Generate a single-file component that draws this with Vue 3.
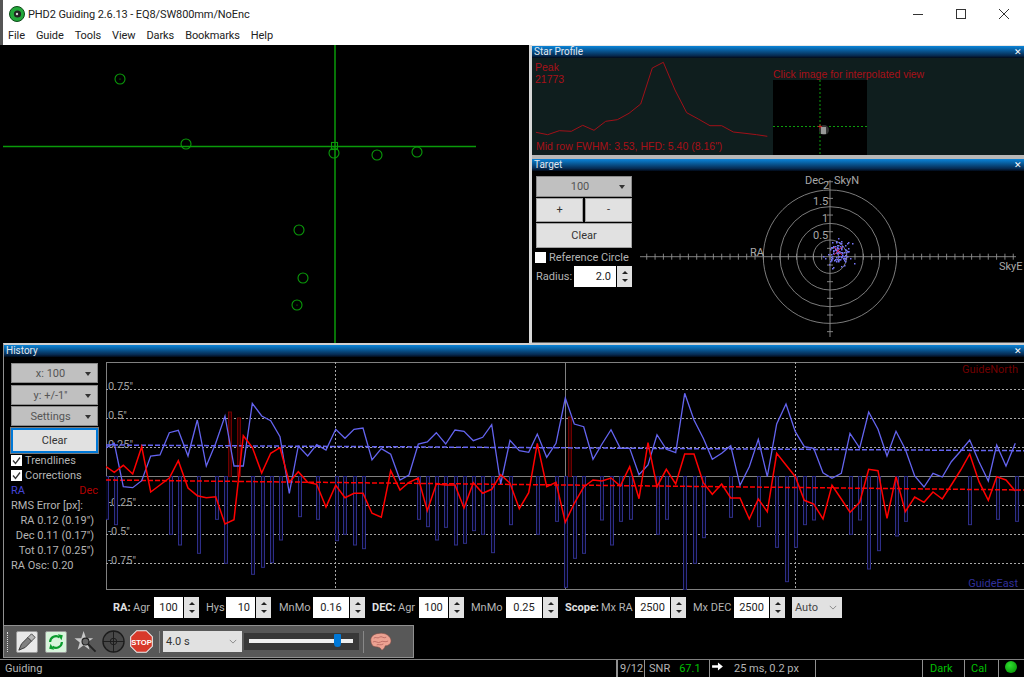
<script setup>
import { computed } from 'vue'

const menu = ['File', 'Guide', 'Tools', 'View', 'Darks', 'Bookmarks', 'Help']

// stars on the main camera view
const stars = [[120, 79, true], [186, 144], [334, 153], [377, 155], [417, 152], [299, 230], [303, 278], [297, 305, true]]

// coordinates read from zoomed crops, 3x scale
const fromZoom = (pts, ox) => pts.map(([x, y]) => [ox + x / 3, 360 + y / 3])
const toLine = pts => pts.map(p => p[0].toFixed(1) + ',' + p[1].toFixed(1)).join(' ')

const blueLine = computed(() => toLine([
  ...fromZoom([[0, 265], [28, 250], [55, 380], [83, 383], [110, 362], [137, 288], [165, 285], [193, 218], [220, 211], [249, 288], [277, 180], [304, 318], [332, 250], [360, 168], [387, 318], [415, 318], [442, 130], [470, 168], [497, 182], [525, 230], [553, 400], [580, 258], [608, 288], [635, 254], [663, 270], [692, 208]], 105),
  ...fromZoom([[15, 235], [42, 208], [69, 204], [96, 300], [124, 266], [152, 283], [180, 360], [207, 345], [235, 252], [262, 246], [289, 218], [317, 252], [345, 210], [372, 214], [400, 242], [428, 232], [455, 194], [482, 372], [510, 241], [538, 272], [566, 277], [592, 222], [620, 292], [648, 250], [676, 114], [703, 192], [731, 200], [759, 298], [786, 252], [813, 209], [841, 265], [869, 265], [897, 344], [924, 315], [951, 224], [979, 268], [1007, 278]], 340),
  ...fromZoom([[14, 100], [42, 180], [70, 235], [97, 298], [125, 280], [152, 257], [180, 376], [208, 320], [235, 238], [262, 350], [290, 192], [318, 132], [346, 215], [373, 260], [401, 265], [429, 338], [456, 355], [484, 340], [510, 220], [539, 264], [566, 156], [594, 208], [621, 288], [648, 214], [676, 268], [704, 348], [732, 381], [759, 340], [787, 351], [814, 305], [842, 273], [869, 240], [897, 305], [925, 363], [950, 255], [978, 318], [1006, 250]], 680)
]))

const redLine = computed(() => toLine([
  ...fromZoom([[0, 318], [28, 337], [55, 316], [83, 342], [110, 260], [137, 396], [165, 375], [193, 354], [220, 302], [249, 384], [277, 407], [304, 413], [332, 410], [360, 492], [387, 479], [415, 227], [442, 262], [470, 339], [497, 280], [525, 263], [553, 367], [580, 335], [608, 367], [635, 373], [663, 441], [692, 376]], 105),
  ...fromZoom([[15, 413], [42, 400], [69, 400], [96, 460], [124, 472], [152, 332], [180, 390], [207, 367], [235, 354], [262, 452], [289, 372], [317, 375], [345, 375], [372, 444], [400, 368], [428, 400], [455, 388], [482, 344], [510, 370], [538, 446], [566, 398], [592, 250], [620, 380], [648, 367], [676, 487], [703, 430], [731, 381], [759, 360], [786, 363], [813, 354], [841, 378], [869, 320], [897, 416], [924, 248], [951, 380], [979, 328], [1007, 372]], 340),
  ...fromZoom([[14, 282], [42, 282], [70, 368], [97, 403], [125, 372], [152, 414], [180, 414], [208, 477], [235, 417], [262, 455], [290, 280], [318, 315], [346, 350], [373, 421], [401, 432], [429, 477], [456, 376], [484, 417], [510, 457], [539, 427], [566, 328], [594, 332], [621, 475], [648, 350], [676, 455], [704, 411], [732, 427], [759, 396], [787, 417], [814, 375], [842, 330], [869, 282], [897, 365], [925, 421], [950, 350], [978, 360], [1006, 393]], 680)
]))

// blue correction bars, [x, bottom]
const blueBars = [
  ...fromZoom([[5, 478], [32, 494], [197, 523], [225, 555], [281, 580], [335, 478], [363, 610], [445, 643], [473, 622], [500, 608], [527, 540], [584, 470], [638, 478], [695, 542]], 105),
  ...fromZoom([[15, 523], [44, 555], [72, 566], [237, 478], [265, 500], [292, 540], [319, 502], [347, 555], [375, 550], [402, 512], [430, 523], [458, 578], [512, 494], [595, 523], [650, 484], [679, 682], [705, 595], [733, 580], [787, 480], [815, 555], [843, 484], [873, 478], [955, 523], [981, 478]], 340),
  ...fromZoom([[15, 690], [45, 610], [72, 533], [154, 472], [238, 500], [292, 562], [320, 665], [348, 562], [375, 494], [403, 480], [513, 523], [541, 480], [568, 627], [596, 572], [650, 528], [678, 484], [871, 494], [954, 478], [1010, 484]], 680)
].map(b => [Math.round(b[0]) - 1.5, b[1]])
const redBars = [[230, 412], [239, 418], [570, 417]]

const gridY = [389.5, 418.5, 447.5, 505.5, 534.5, 563.5]
const yLabels = [['0.75"', 390], ['0.5"', 419], ['0.25"', 448], ['-0.25"', 506], ['-0.5"', 535], ['-0.75"', 564]]

// target plot
const cx = 830
const cy = 256.7
const unit = 8.33
const hTicks = computed(() => {
  const out = []
  for (let k = -22; k <= 22; k++) out.push(cx + k * unit)
  return out
})
const vTicks = [-9, -7, -5, -3, -1, 1, 3, 5, 7, 9].map(k => cy + k * unit)

const scatter = computed(() => {
  let seed = 17
  const rnd = () => {
    seed = (seed * 16807) % 2147483647
    return seed / 2147483647
  }
  const out = []
  for (let i = 0; i < 90; i++) {
    const a = rnd() * Math.PI * 2
    const r = (rnd() + rnd()) * 6.5
    out.push([Math.round(838 + Math.cos(a) * r * 1.1), Math.round(252 + Math.sin(a) * r * 1.3)])
  }
  return out.concat([[847, 243], [852, 243], [844, 260], [850, 258], [854, 263], [825, 258], [829, 264], [833, 267], [832, 268], [844, 265], [823, 256]])
})

const sideText = [
  { t: 'RMS Error [px]:' },
  { t: 'RA 0.12 (0.19")', r: true },
  { t: 'Dec 0.11 (0.17")', r: true },
  { t: 'Tot 0.17 (0.25")', r: true },
  { t: 'RA Osc: 0.20' }
]

// bottom row of the history panel, w = label width, iw = input width, after = space after spinner
const fields = [
  { bold: 'RA:', label: 'Agr', lead: 20, w: 41, val: '100', iw: 29, after: 7 },
  { label: 'Hys', w: 20, val: '10', iw: 29, after: 8, right: true },
  { label: 'MnMo', w: 34, val: '0.16', iw: 36, after: 7 },
  { bold: 'DEC:', label: 'Agr', lead: 26, w: 47, val: '100', iw: 29, after: 7 },
  { label: 'MnMo', w: 35, val: '0.25', iw: 36, after: 7 },
  { bold: 'Scope:', label: 'Mx RA', lead: 36, w: 70, val: '2500', iw: 35, after: 7 },
  { label: 'Mx DEC', w: 41, val: '2500', iw: 35, after: 7 }
]
</script>

<template>
  <div class="app">
    <header class="titlebar">
      <svg class="logo" viewBox="0 0 16 16">
        <circle cx="8" cy="8" r="7.5" fill="#23a83a" />
        <circle cx="8" cy="8" r="7.5" fill="none" stroke="#0c4a18" />
        <circle cx="8.5" cy="8" r="3.6" fill="#222" />
        <circle cx="8" cy="8" r="1.2" fill="#ddd" />
      </svg>
      <span class="title">PHD2 Guiding 2.6.13 - EQ8/SW800mm/NoEnc</span>
      <div class="winbtns">
        <svg viewBox="0 0 10 10"><path d="M0 5.5H10" /></svg>
        <svg viewBox="0 0 10 10"><rect x="0.5" y="0.5" width="9" height="9" /></svg>
        <svg viewBox="0 0 10 10"><path d="M0 0L10 10M10 0L0 10" /></svg>
      </div>
    </header>
    <nav class="menubar">
      <span v-for="m in menu" :key="m">{{ m }}</span>
    </nav>

    <div class="top">
      <svg class="camera" viewBox="3 45 526 298">
        <line x1="335" y1="45" x2="335" y2="343" class="cam-line" />
        <line x1="3" y1="146.5" x2="476" y2="146.5" class="cam-line" />
        <rect x="331.5" y="142.5" width="6" height="7" class="cam-thin" />
        <g v-for="s in stars" :key="s[0]">
          <circle :cx="s[0]" :cy="s[1]" r="5" class="cam-thin" />
          <circle v-if="s[2]" :cx="s[0]" :cy="s[1]" r="0.6" fill="#0a0" />
        </g>
      </svg>

      <div class="right">
        <section class="panel profile">
          <div class="caption">Star Profile<span class="x">✕</span></div>
          <svg class="fill" viewBox="532 58 492 97">
            <polyline class="prof" points="536,132.3 547.7,134.7 559.3,130.7 571.3,131.3 582.7,125.3 594,130.3 605.7,121.3 617.3,119.7 629,113.3 640.7,104 652.3,68 663.3,62.3 675,90 686.7,112.7 698.3,119 710,125.7 721.7,125.7 733.3,132 745,133.3 756.7,134.7 767.3,136.3" />
            <text x="535" y="71" class="prof-text">Peak</text>
            <text x="535" y="83" class="prof-text">21773</text>
            <text x="536" y="150" class="prof-text">Mid row FWHM: 3.53, HFD: 5.40 (8.16")</text>
            <text x="773" y="78" class="prof-text">Click image for interpolated view</text>
            <rect x="773" y="80" width="94" height="75" fill="#000" />
            <line x1="820" y1="80" x2="820" y2="155" class="prof-dash" />
            <line x1="773" y1="126.5" x2="867" y2="126.5" class="prof-dash" />
            <circle cx="824" cy="130" r="5" fill="#333" />
            <rect x="821" y="127" width="5" height="7" fill="#999" />
            <path d="M818 126.5H822M820 124.5V128.5" stroke="#c02020" />
          </svg>
        </section>
        <section class="panel target">
          <div class="caption">Target<span class="x">✕</span></div>
          <div class="target-body">
            <div class="target-ctl">
              <div class="dd dd-big">100<i class="caret"></i></div>
              <div class="pm">
                <div class="btn">+</div>
                <div class="btn">-</div>
              </div>
              <div class="btn clear-t">Clear</div>
              <label class="check"><span class="box"></span>Reference Circle</label>
              <div class="radius">
                <span>Radius:</span>
                <span class="input input-r">2.0</span>
                <span class="spin"><i class="up"></i><i class="down"></i></span>
              </div>
            </div>
            <svg class="plot" viewBox="640 171 384 171">
              <circle v-for="r in [16.7, 33.3, 50, 66.7]" :key="r" :cx="cx" :cy="cy" :r="r" class="ring" />
              <line x1="640" :y1="cy" x2="1016" :y2="cy" class="axis" />
              <line :x1="cx" y1="180" :x2="cx" y2="337" class="axis" />
              <line v-for="t in hTicks" :key="t" :x1="t" :y1="cy - 3" :x2="t" :y2="cy + 3" class="axis" />
              <line v-for="t in vTicks" :key="t" :x1="cx - 3" :y1="t" :x2="cx + 3" :y2="t" class="axis" />
              <text x="805" y="184" class="plot-text">Dec</text>
              <text x="823" y="189" class="plot-text">2</text>
              <text x="834" y="184" class="plot-text">SkyN</text>
              <text x="813" y="205" class="plot-text">1.5</text>
              <text x="822" y="222" class="plot-text">1</text>
              <text x="813" y="239" class="plot-text">0.5</text>
              <text x="750" y="256" class="plot-text">RA</text>
              <text x="999" y="270" class="plot-text">SkyE</text>
              <rect v-for="(p, i) in scatter" :key="i" :x="p[0]" :y="p[1]" width="1.5" height="1.5" fill="#7474f4" />
              <path d="M834 247L842 255M842 247L834 255" stroke="#e02050" stroke-width="0.8" />
            </svg>
          </div>
        </section>
      </div>
    </div>

    <section class="panel history">
      <div class="caption">History<span class="x">✕</span></div>
      <div class="hist-main">
        <aside class="hist-side">
          <div class="dd">x: 100<i class="caret"></i></div>
          <div class="dd">y: +/-1''<i class="caret"></i></div>
          <div class="dd">Settings<i class="caret"></i></div>
          <div class="btn clear-h">Clear</div>
          <label class="check"><span class="box"><svg viewBox="0 0 11 11"><path d="M2 5.5L4.5 8.5L9 2.5" /></svg></span>Trendlines</label>
          <label class="check"><span class="box"><svg viewBox="0 0 11 11"><path d="M2 5.5L4.5 8.5L9 2.5" /></svg></span>Corrections</label>
          <div class="legend"><span class="ra">RA</span><span class="dec">Dec</span></div>
          <div v-for="s in sideText" :key="s.t" class="sline" :class="{ rt: s.r }">{{ s.t }}</div>
        </aside>
        <svg class="graph" viewBox="106 362 918 228">
          <rect x="106.5" y="362.5" width="920" height="227" fill="none" stroke="#808080" />
          <line v-for="y in gridY" :key="y" x1="106" :y1="y" x2="1024" :y2="y" class="gdash" />
          <line x1="106" y1="476.5" x2="1024" y2="476.5" stroke="#808080" />
          <line x1="335.5" y1="362" x2="335.5" y2="590" class="gdash" />
          <line x1="795.5" y1="362" x2="795.5" y2="590" class="gdash" />
          <line x1="565.5" y1="362" x2="565.5" y2="590" stroke="#808080" />
          <text v-for="l in yLabels" :key="l[0]" x="108" :y="l[1]" class="glabel">{{ l[0] }}</text>
          <text x="1018" y="373" text-anchor="end" class="gnorth">GuideNorth</text>
          <text x="1018" y="587" text-anchor="end" class="geast">GuideEast</text>
          <rect v-for="(b, i) in blueBars" :key="i" :x="b[0]" y="476.5" width="3" :height="b[1] - 476.5" class="bbar" />
          <rect v-for="b in redBars" :key="b[0]" :x="b[0] - 1.5" :y="b[1]" width="3" :height="476.5 - b[1]" class="rbar" />
          <line x1="106" y1="445" x2="1024" y2="450.7" class="trend-b" />
          <line x1="106" y1="480" x2="1024" y2="490" class="trend-r" />
          <polyline :points="blueLine" class="line-b" />
          <polyline :points="redLine" class="line-r" />
        </svg>
      </div>
      <div class="hist-controls">
        <div v-for="f in fields" :key="f.label + f.val" class="field" :style="{ marginRight: f.after + 'px' }">
          <div class="flabel" :style="{ width: f.w + 'px' }">
            <b v-if="f.bold" :style="{ width: f.lead + 'px' }">{{ f.bold }}</b>{{ f.label }}
          </div>
          <span class="input" :class="{ 'input-r': f.right }" :style="{ width: f.iw + 'px' }">{{ f.val }}</span>
          <span class="spin"><i class="up"></i><i class="down"></i></span>
        </div>
        <div class="auto">Auto<svg viewBox="0 0 10 6"><path d="M1 1L5 5L9 1" /></svg></div>
      </div>
    </section>

    <div class="toolbar-row">
      <div class="toolbar">
        <span class="grip"></span>
        <div class="tool tool-usb">
          <svg viewBox="0 0 22 22">
            <path d="M2 20L5 13L12 6L16 10L9 17Z" fill="#808080" stroke="#333" />
            <path d="M12 6L16 2L20 6L16 10Z" fill="#b8b8b8" stroke="#444" />
          </svg>
        </div>
        <div class="tool tool-loop">
          <svg viewBox="0 0 22 22">
            <path d="M4.5 11A6.5 6.5 0 0 1 15 6" class="loop" />
            <path d="M17.5 11A6.5 6.5 0 0 1 7 16" class="loop" />
            <path d="M13 2.5L18.5 3.5L17 9Z" fill="#0a9c2e" />
            <path d="M9 19.5L3.5 18.5L5 13Z" fill="#0a9c2e" />
          </svg>
        </div>
        <svg class="ticon" viewBox="0 0 24 24">
          <path d="M10 1L12.6 8.5H20L14 13L16.2 20.5L10 16L3.8 20.5L6 13L0.5 8.5H7.6Z" fill="#c8c8c8" />
          <circle cx="12" cy="12" r="3.6" fill="#666" stroke="#222" stroke-width="1.2" />
          <path d="M15 15L22.5 22.5" stroke="#222" stroke-width="2" />
        </svg>
        <svg class="ticon ticon-t" viewBox="0 0 24 24">
          <circle cx="12" cy="12" r="11" fill="#484848" stroke="#1c1c1c" stroke-width="1.4" />
          <circle cx="12" cy="12" r="3.4" fill="none" stroke="#1c1c1c" />
          <path d="M1 12H23M12 1V23" stroke="#1c1c1c" />
        </svg>
        <svg class="ticon ticon-s" viewBox="0 0 24 24">
          <path d="M7 0.7H17L23.3 7V17L17 23.3H7L0.7 17V7Z" fill="#d8392b" stroke="#eee" stroke-width="1.1" />
          <text x="12" y="15.6" text-anchor="middle" class="stop">STOP</text>
        </svg>
        <span class="tsep"></span>
        <div class="texp">4.0 s<svg viewBox="0 0 10 6"><path d="M1 1L5 5L9 1" /></svg></div>
        <div class="slider"><span class="track"></span><span class="thumb"></span></div>
        <span class="tsep tsep-b"></span>
        <svg class="brain" viewBox="0 0 24 20">
          <path d="M2 9C1 4 6 1 11 1C17 0 23 4 23 9C23 12 20 14 17 14C16 17 14 19 13 18C12 16 10 15 7 15C4 15 2 12 2 9Z" fill="#eca292" stroke="#8a5048" stroke-width="0.6" />
          <path d="M5 6C7 4 9 7 11 5C13 3 15 7 18 5M4 10C7 8 9 12 12 10C14 8 17 11 20 9M8 13C10 12 12 14 15 12" fill="none" stroke="#b0605a" stroke-width="0.8" />
        </svg>
      </div>
    </div>

    <footer class="status">
      <span class="st st-main">Guiding</span>
      <span class="st st-frames">9/12</span>
      <span class="st st-snr">SNR <em>67.1</em></span>
      <span class="st st-guide">
        <svg viewBox="0 0 12 10"><path d="M0 3.5H6.5V0.5L12 5L6.5 9.5V6.5H0Z" fill="#fff" /></svg>
        25 ms, 0.2 px
      </span>
      <span class="st st-blank"></span>
      <span class="st st-dark"><em>Dark</em></span>
      <span class="st st-cal"><em>Cal</em></span>
      <span class="st st-led"><i></i></span>
    </footer>
  </div>
</template>

<style scoped>
.app {
  width: 1024px;
  height: 677px;
  background: #000;
  overflow: hidden;
  display: flex;
  flex-direction: column;
  font-family: Roboto, "Noto Sans", sans-serif;
  font-size: 11px;
  color: #b4b4b4;
}

.titlebar {
  height: 28px;
  box-sizing: border-box;
  border-left: 3px solid #555;
  background: #fff;
  display: flex;
  align-items: center;
  color: #222;
  font-size: 11px;
  letter-spacing: -0.1px;
  flex-shrink: 0;
}
.logo {
  width: 16px;
  height: 16px;
  margin-left: 6px;
}
.title {
  margin-left: 3px;
}
.winbtns {
  margin-left: auto;
  display: flex;
  gap: 33px;
  padding-right: 15px;
}
.winbtns svg {
  width: 10px;
  height: 10px;
  fill: none;
  stroke: #333;
}

.menubar {
  height: 17px;
  box-sizing: border-box;
  border-left: 3px solid #555;
  background: #fff;
  display: flex;
  gap: 11px;
  padding-left: 5px;
  color: #222;
  font-size: 11px;
  letter-spacing: -0.1px;
  line-height: 15px;
  flex-shrink: 0;
}

.top {
  height: 298px;
  display: flex;
  flex-shrink: 0;
}
.camera {
  width: 526px;
  height: 298px;
  margin-left: 3px;
  background: #000;
  flex-shrink: 0;
}
.cam-line {
  stroke: #0a9a0a;
  stroke-width: 1.5;
}
.cam-thin {
  fill: none;
  stroke: #0a9a0a;
  stroke-width: 1.1;
}
.right {
  width: 495px;
  box-sizing: border-box;
  border-left: 3px solid #d8d8d8;
  display: flex;
  flex-direction: column;
  flex-shrink: 0;
}

.panel {
  display: flex;
  flex-direction: column;
  box-sizing: border-box;
}
.caption {
  height: 12px;
  background: linear-gradient(#0a84d8, #062a50 80%, #020a18);
  color: #e0e8f0;
  font-size: 10px;
  line-height: 12px;
  padding-left: 2px;
  display: flex;
  justify-content: space-between;
  flex-shrink: 0;
}
.x {
  color: #fff;
  font-size: 9px;
  padding-right: 2px;
}
.profile {
  height: 113px;
  border-top: 1px solid #e8e8e8;
  border-bottom: 3px solid #b8b8b8;
  background: #0f1e1e;
  flex-shrink: 0;
}
.fill {
  width: 492px;
  height: 97px;
  display: block;
  flex-shrink: 0;
}
.prof {
  fill: none;
  stroke: #a01018;
  stroke-width: 1;
}
.prof-text {
  fill: #a81018;
  font-family: "Liberation Sans", sans-serif;
  font-size: 10.5px;
}
.prof-dash {
  stroke: #0c9c0c;
  stroke-dasharray: 2 2;
}

.target {
  height: 185px;
  border-top: 1px solid #b8b8b8;
  flex-shrink: 0;
}
.target-body {
  display: flex;
  height: 172px;
  background: #000;
  border-bottom: 1px solid #666;
  box-sizing: border-box;
}
.target-ctl {
  width: 108px;
  padding: 5px 0 0 3px;
  box-sizing: border-box;
  display: flex;
  flex-direction: column;
  flex-shrink: 0;
}
.plot {
  width: 384px;
  height: 171px;
  flex-shrink: 0;
}
.ring {
  fill: none;
  stroke: #9a9a9a;
  stroke-width: 0.8;
}
.axis {
  stroke: #909090;
  stroke-width: 0.9;
}
.plot-text {
  fill: #a8a8a8;
  font-size: 11px;
  font-family: Roboto, sans-serif;
}

.dd {
  height: 20px;
  margin-bottom: 1.5px;
  background: #c0c0c0;
  border: 1px solid #8a8a8a;
  box-sizing: border-box;
  color: #555;
  text-align: center;
  line-height: 19px;
  padding-right: 8px;
  position: relative;
}
.dd-big {
  width: 96px;
  margin-left: 1px;
  height: 21px;
  margin-bottom: 1px;
}
.caret {
  position: absolute;
  right: 6px;
  top: 8px;
  border: 3.5px solid transparent;
  border-top: 4px solid #333;
  border-bottom: 0;
}
.btn {
  background: #e1e1e1;
  border: 1px solid #a0a0a0;
  box-sizing: border-box;
  color: #333;
  text-align: center;
}
.pm {
  display: flex;
  gap: 2px;
  width: 96px;
  margin-left: 1px;
}
.pm .btn {
  flex: 1;
  height: 24px;
  line-height: 22px;
}
.clear-t {
  width: 96px;
  margin: 1px 0 0 1px;
  height: 25px;
  line-height: 23px;
}
.check {
  display: flex;
  align-items: center;
  gap: 3px;
  height: 18px;
  color: #b4b4b4;
  white-space: nowrap;
}
.box {
  width: 11px;
  height: 11px;
  background: #fff;
  flex-shrink: 0;
}
.box svg {
  display: block;
  fill: none;
  stroke: #333;
  stroke-width: 1.3;
}
.radius {
  display: flex;
  align-items: center;
  margin-left: 1px;
}
.radius span:first-child {
  width: 38px;
}
.input {
  height: 21px;
  background: #fff;
  color: #222;
  text-align: center;
  line-height: 21px;
  box-sizing: border-box;
}
.radius .input {
  width: 42px;
}
.input-r {
  text-align: right;
  padding-right: 5px;
}
.spin {
  width: 15px;
  height: 21px;
  margin-left: 1px;
  background: #e1e1e1;
  display: flex;
  flex-direction: column;
  align-items: center;
  justify-content: space-around;
  padding: 3px 0;
  box-sizing: border-box;
  flex-shrink: 0;
}
.up {
  border: 3px solid transparent;
  border-bottom: 3px solid #222;
  border-top: 0;
}
.down {
  border: 3px solid transparent;
  border-top: 3px solid #222;
  border-bottom: 0;
}

.history {
  margin-left: 3px;
  height: 282px;
  border-left: 1px solid #909090;
  border-top: 2px solid #d0d0d0;
  flex-shrink: 0;
}
.hist-main {
  display: flex;
  height: 233px;
  flex-shrink: 0;
}
.hist-side {
  width: 87px;
  margin: 6px 0 0 7px;
  flex-shrink: 0;
}
.hist-side .check {
  height: 15px;
}
.clear-h {
  height: 25px;
  line-height: 21px;
  border: 2px solid #0078d7;
  outline: 1px solid #777;
}
.legend {
  display: flex;
  justify-content: space-between;
  line-height: 15px;
}
.ra {
  color: #4444d8;
}
.dec {
  color: #b00000;
}
.sline {
  line-height: 15px;
  white-space: nowrap;
}
.rt {
  text-align: right;
  padding-right: 4px;
}
.graph {
  width: 918px;
  height: 228px;
  margin: 5px 0 0 8px;
  flex-shrink: 0;
}
.gdash {
  stroke: #a8a8a8;
  stroke-dasharray: 2 2;
}
.glabel {
  fill: #a0a0a0;
  font-size: 11px;
  font-family: Roboto, sans-serif;
}
.gnorth {
  fill: #700000;
  font-size: 11px;
  font-family: Roboto, sans-serif;
}
.geast {
  fill: #30309a;
  font-size: 11px;
  font-family: Roboto, sans-serif;
}
.bbar {
  fill: #05051a;
  stroke: #2e2e88;
  stroke-width: 1;
}
.rbar {
  fill: #300000;
  stroke: #780000;
  stroke-width: 0.9;
}
.trend-b {
  stroke: #6464f0;
  stroke-width: 1.5;
  stroke-dasharray: 5 2;
}
.trend-r {
  stroke: #ff0000;
  stroke-width: 1.5;
  stroke-dasharray: 5 2;
}
.line-b {
  fill: none;
  stroke: #6464f0;
  stroke-width: 1.3;
}
.line-r {
  fill: none;
  stroke: #ff0000;
  stroke-width: 1.5;
}

.hist-controls {
  display: flex;
  align-items: center;
  height: 21px;
  margin-top: 7px;
  padding-left: 109px;
  flex-shrink: 0;
}
.field {
  display: flex;
  align-items: center;
  flex-shrink: 0;
}
.flabel {
  display: flex;
  flex-shrink: 0;
  white-space: nowrap;
}
.flabel b {
  color: #e0e0e0;
  font-weight: 700;
  flex-shrink: 0;
}
.auto {
  width: 50px;
  height: 21px;
  background: #e1e1e1;
  color: #444;
  line-height: 21px;
  padding-left: 3px;
  box-sizing: border-box;
  display: flex;
  justify-content: space-between;
  align-items: center;
}
.auto svg,
.texp svg {
  width: 8px;
  height: 5px;
  fill: none;
  stroke: #777;
  margin-right: 5px;
}

.toolbar-row {
  height: 34px;
  border-bottom: 1px solid #808080;
  flex-shrink: 0;
}
.toolbar {
  width: 411px;
  height: 33px;
  margin-left: 3px;
  box-sizing: border-box;
  background: #585858;
  border: 1px solid #909090;
  display: flex;
  align-items: center;
  padding-left: 3px;
}
.grip {
  width: 1px;
  height: 20px;
  border-left: 1px dotted #ddd;
  margin-right: 7px;
}
.tool {
  width: 22px;
  height: 22px;
  border: 1px solid #999;
  margin-right: 7px;
  box-sizing: border-box;
  border-radius: 2px;
  flex-shrink: 0;
}
.tool svg {
  display: block;
  width: 20px;
  height: 20px;
}
.tool-usb {
  background: #e8e8e8;
}
.tool-loop {
  background: #d8f4dc;
}
.loop {
  fill: none;
  stroke: #0a9c2e;
  stroke-width: 2.4;
}
.ticon {
  width: 23px;
  height: 23px;
  margin-right: 5px;
  flex-shrink: 0;
}
.stop {
  fill: #fff;
  font-family: "Liberation Sans", sans-serif;
  font-size: 8px;
  font-weight: 700;
}
.tsep {
  width: 1px;
  height: 22px;
  background: #888;
  margin: 0 3px 0 1px;
  flex-shrink: 0;
}
.tsep-b {
  margin: 0 3px 0 4px;
}
.texp {
  width: 79px;
  height: 21px;
  background: #e1e1e1;
  color: #333;
  padding-left: 3px;
  box-sizing: border-box;
  line-height: 21px;
  display: flex;
  justify-content: space-between;
  align-items: center;
  flex-shrink: 0;
}
.slider {
  width: 115px;
  height: 17px;
  margin-left: 2px;
  background: #383838;
  position: relative;
  flex-shrink: 0;
}
.track {
  position: absolute;
  left: 5px;
  right: 6px;
  top: 6px;
  height: 4px;
  background: #f0f0f0;
}
.thumb {
  position: absolute;
  left: 90px;
  top: 1px;
  width: 7px;
  height: 13px;
  background: #0078d7;
  border-radius: 1px 1px 4px 4px;
}
.brain {
  width: 23px;
  height: 20px;
  margin-left: 2px;
  flex-shrink: 0;
}

.status {
  flex: 1;
  display: flex;
  align-items: stretch;
  font-size: 11px;
  line-height: 17px;
}
.st {
  box-sizing: border-box;
  border-left: 1px solid #909090;
  white-space: nowrap;
  display: flex;
  align-items: center;
  flex-shrink: 0;
}
.st em {
  color: #00c000;
  font-style: normal;
}
.st-main {
  width: 616px;
  border-left: 0;
  padding-left: 5px;
}
.st-frames {
  width: 28px;
  border-left-width: 2px;
  padding-left: 2px;
}
.st-snr {
  width: 65px;
  padding-left: 4px;
  gap: 9px;
}
.st-guide {
  width: 106px;
  padding-left: 2px;
  gap: 11px;
}
.st-guide svg {
  width: 11px;
  height: 9px;
  margin-bottom: 4px;
}
.st-blank {
  width: 107px;
}
.st-dark {
  width: 42px;
  padding-left: 7px;
}
.st-cal {
  width: 34px;
  padding-left: 6px;
}
.st-led {
  flex: 1;
  padding-left: 6px;
}
.st-led i {
  width: 12px;
  height: 12px;
  border-radius: 50%;
  background: radial-gradient(circle at 40% 35%, #30e030, #008800);
  margin-bottom: 3px;
}
</style>
